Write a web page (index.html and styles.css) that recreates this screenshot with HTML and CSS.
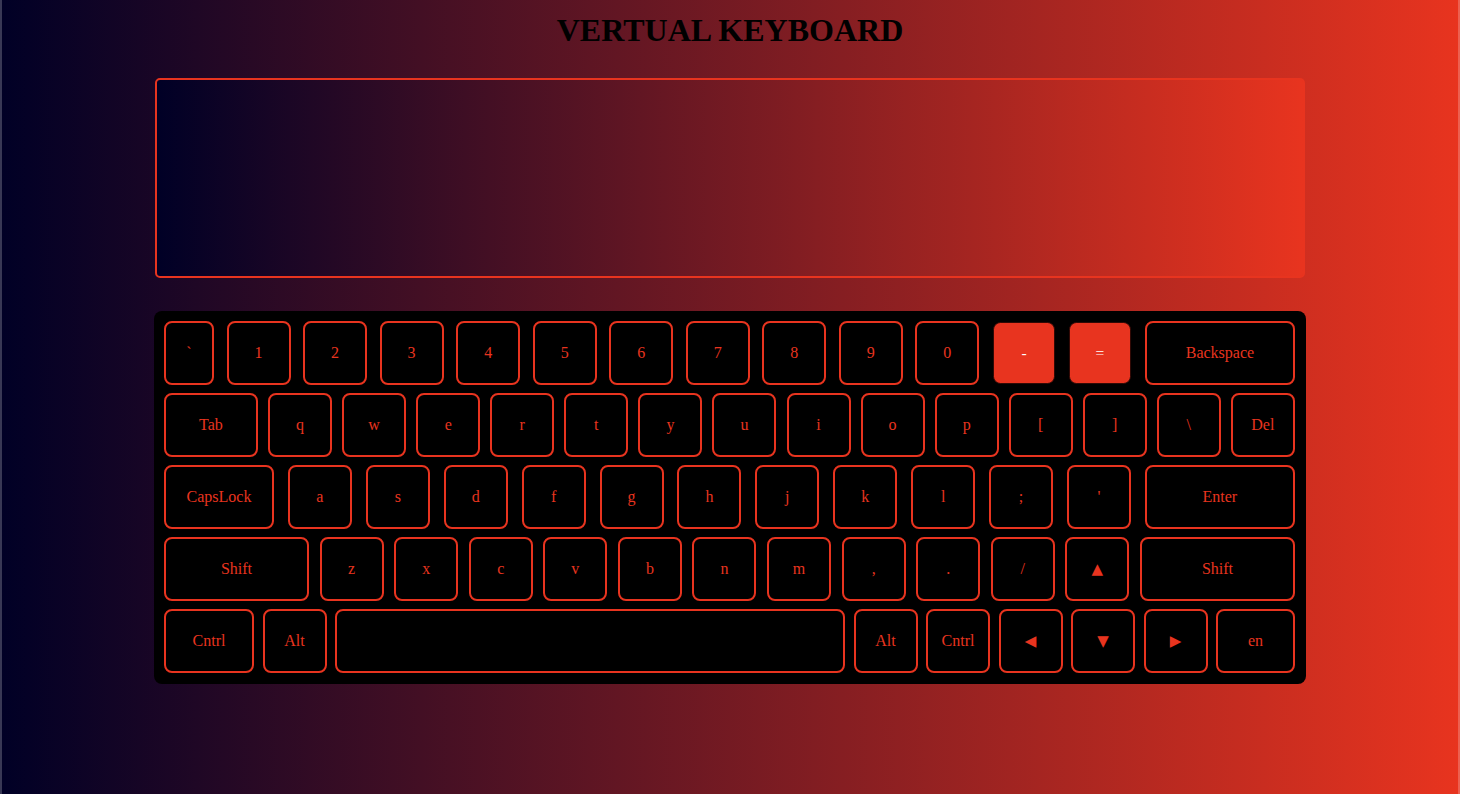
FILE: index.html
```html
<!DOCTYPE html>
<html lang="en">
<head>
<meta charset="utf-8">
<title>Vertual Keyboard</title>
<link rel="stylesheet" href="styles.css">
</head>
<body>
<h1 class="title">VERTUAL KEYBOARD</h1>
<textarea class="screen"></textarea>
<div class="keyboard">
  <div class="row">
    <div class="key w50">`</div>
    <div class="key">1</div>
    <div class="key">2</div>
    <div class="key">3</div>
    <div class="key">4</div>
    <div class="key">5</div>
    <div class="key">6</div>
    <div class="key">7</div>
    <div class="key">8</div>
    <div class="key">9</div>
    <div class="key">0</div>
    <div class="key active">-</div>
    <div class="key active">=</div>
    <div class="key w150">Backspace</div>
  </div>
  <div class="row">
    <div class="key w94">Tab</div>
    <div class="key">q</div>
    <div class="key">w</div>
    <div class="key">e</div>
    <div class="key">r</div>
    <div class="key">t</div>
    <div class="key">y</div>
    <div class="key">u</div>
    <div class="key">i</div>
    <div class="key">o</div>
    <div class="key">p</div>
    <div class="key">[</div>
    <div class="key">]</div>
    <div class="key">\</div>
    <div class="key">Del</div>
  </div>
  <div class="row">
    <div class="key w110">CapsLock</div>
    <div class="key">a</div>
    <div class="key">s</div>
    <div class="key">d</div>
    <div class="key">f</div>
    <div class="key">g</div>
    <div class="key">h</div>
    <div class="key">j</div>
    <div class="key">k</div>
    <div class="key">l</div>
    <div class="key">;</div>
    <div class="key">'</div>
    <div class="key w150">Enter</div>
  </div>
  <div class="row">
    <div class="key w145">Shift</div>
    <div class="key">z</div>
    <div class="key">x</div>
    <div class="key">c</div>
    <div class="key">v</div>
    <div class="key">b</div>
    <div class="key">n</div>
    <div class="key">m</div>
    <div class="key">,</div>
    <div class="key">.</div>
    <div class="key">/</div>
    <div class="key arrow">&#9650;</div>
    <div class="key w155">Shift</div>
  </div>
  <div class="row">
    <div class="key w90">Cntrl</div>
    <div class="key">Alt</div>
    <div class="key w510"></div>
    <div class="key">Alt</div>
    <div class="key">Cntrl</div>
    <div class="key arrow">&#9664;</div>
    <div class="key arrow">&#9660;</div>
    <div class="key arrow">&#9654;</div>
    <div class="key w79">en</div>
  </div>
</div>
</body>
</html>
```
FILE: styles.css
```css
html {
  min-height: 100%;
}
body {
  margin: 0;
  min-height: 100vh;
  box-sizing: border-box;
  border-left: 2px solid rgba(255, 255, 255, 0.22);
  border-right: 2px solid rgba(255, 255, 255, 0.22);
  background: linear-gradient(to right, #000026, #e8341f);
  display: flex;
  flex-direction: column;
  align-items: center;
  font-family: "Liberation Serif", "Times New Roman", serif;
}
.title {
  margin: 12px 0 0;
  font-size: 32px;
  line-height: 37px;
  font-weight: bold;
  color: #000;
  text-align: center;
}
.screen {
  display: block;
  margin: 29px 0 0;
  width: 1150px;
  height: 200px;
  box-sizing: border-box;
  border: 2px solid #e8341f;
  border-radius: 5px;
  background: linear-gradient(to right, #000026, #e8341f);
  outline: none;
  resize: none;
  padding: 10px;
  color: #fff;
  font-family: "Liberation Serif", serif;
  font-size: 16px;
}
.keyboard {
  margin-top: 33px;
  width: 1152px;
  box-sizing: border-box;
  padding: 10px 11px 11px 10px;
  background: #000;
  border-radius: 8px;
  display: flex;
  flex-direction: column;
  gap: 8px;
}
.row {
  display: flex;
  justify-content: space-between;
}
.key {
  width: 64px;
  height: 64px;
  box-sizing: border-box;
  border: 2px solid #e8341f;
  border-radius: 8px;
  display: flex;
  align-items: center;
  justify-content: center;
  color: #e8341f;
  font-size: 16px;
}
.key.active {
  background: #e8341f;
  border: 1px solid #2a0805;
  color: #fff;
  transform: scale(0.97);
}
.key.arrow {
  font-family: "DejaVu Sans", sans-serif;
  font-size: 15px;
}
.w50 { width: 50px; }
.w79 { width: 79px; }
.w90 { width: 90px; }
.w94 { width: 94px; }
.w110 { width: 110px; }
.w145 { width: 145px; }
.w150 { width: 150px; }
.w155 { width: 155px; }
.w510 { width: 510px; }
```
